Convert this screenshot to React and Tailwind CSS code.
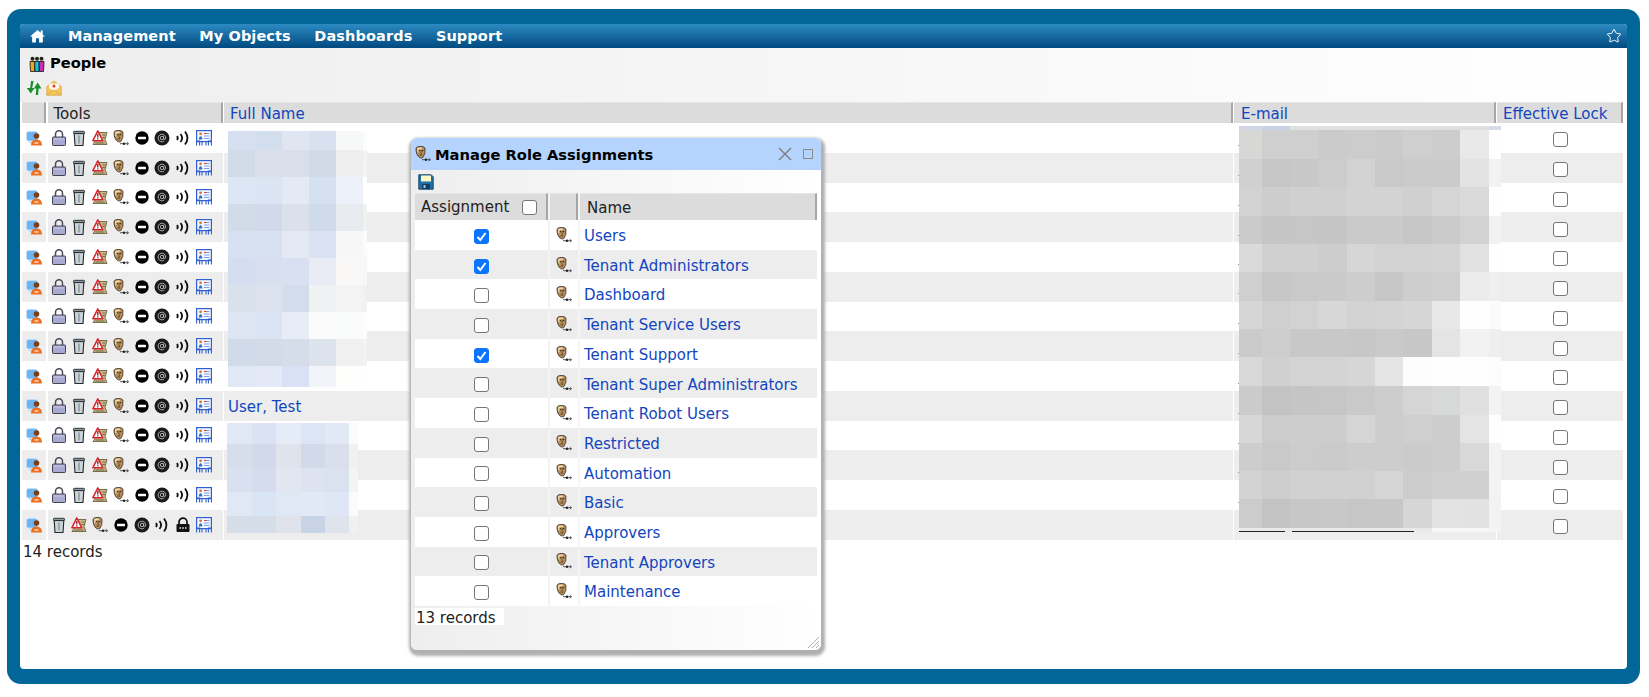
import React from 'react';
import { Star } from 'lucide-react';

const FONT = "font-['DejaVu_Sans',Verdana,sans-serif]";

// Lista de papéis do modal: [nome, marcado]
const ROLES = [
  ['Users', true],
  ['Tenant Administrators', true],
  ['Dashboard', false],
  ['Tenant Service Users', false],
  ['Tenant Support', true],
  ['Tenant Super Administrators', false],
  ['Tenant Robot Users', false],
  ['Restricted', false],
  ['Automation', false],
  ['Basic', false],
  ['Approvers', false],
  ['Tenant Approvers', false],
  ['Maintenance', false],
];

// Blocos pixelados que escondem nomes e e-mails
const NAME_A = {
  xs: [0, 27, 54, 81, 108, 135, 139],
  ys: [0, 19, 46, 73, 100, 127, 154, 181, 208, 235, 256],
  rows: [
    ['d5dff0', 'd3dfef', 'dfe6f2', 'd9e1f0', 'f7f9f9', 'fbfcfc'],
    ['d2dbe8', 'd9e0e9', 'd8dfea', 'd2dae8', 'efefef', 'f3f3f3'],
    ['dde6f4', 'dbe4f3', 'e3e9f5', 'd5e0f1', 'ebf0f9', 'ffffff'],
    ['d2dbe8', 'd2d9ea', 'dbe1ea', 'cfdbeb', 'e7eaee', 'f0f0f0'],
    ['d8e1f2', 'd8e1f2', 'e4e9f4', 'dbe3f2', 'f7f7f8', 'fbfbfb'],
    ['d5def0', 'd8e0f0', 'd9e0f1', 'e9ecf5', 'f9f8f7', 'f7f7f7'],
    ['d9e1ec', 'dbe2ed', 'd3dcea', 'f0f1f3', 'f3f3f3', 'f1f1f1'],
    ['dde5f3', 'dbe4f3', 'e7ecf6', 'fbfbfb', 'fafbfb', 'fcfcfc'],
    ['d1dae8', 'd3dbe9', 'd5dcea', 'dce3ec', 'f0f0f0', 'f3f3f3'],
    ['e0e7f5', 'e3e9f6', 'd9e2f4', 'f3f4fa', 'fefefd', 'ffffff'],
  ],
};

const NAME_B = {
  xs: [0, 25, 49, 74, 98, 122, 131],
  ys: [0, 21, 45, 69, 93, 110],
  rows: [
    ['e0e8f5', 'dae2f4', 'e6ecf7', 'dbe5f5', 'e1e8f6', 'fafbfe'],
    ['d6deeb', 'd1d9ea', 'dfe3ec', 'd2daea', 'd9dfeb', 'f0f0f0'],
    ['d9e1f0', 'd4dcee', 'e1e6f0', 'dde3f0', 'dae1ef', 'f3f4f6'],
    ['e0e8f6', 'd9e4f5', 'e0e8f5', 'e2e9f6', 'dfe7f6', 'fbfbfc'],
    ['d5dde9', 'd5dde9', 'e0e3eb', 'c8d3e6', 'dfe3ec', 'f0f1ef'],
  ],
};

const EMAIL = {
  xs: [0, 23, 51, 79, 108, 136, 164, 193, 221, 250, 262],
  ys: [0, 4, 32.7, 61, 89.7, 118, 146, 174.7, 203, 231, 260, 288.7, 316.7, 345, 373.3, 401.7, 406],
  rows: [
    ['d0d6e4', 'c9d2e4', 'e0e0e0', 'e0e0e0', 'e0e0e0', 'e0e0e0', 'e0e0e0', 'e0e0e0', 'e0e0e0', 'd6dcea'],
    ['d7d7d5', 'cfcfcf', 'cfcfcf', 'cbcbcb', 'cccccc', 'cbcbcb', 'cfcfcf', 'cdcdcd', 'e9e9e9', 'fefefe'],
    ['d0d0d0', 'c6c6c6', 'c8c8c8', 'cccccc', 'd2d2d2', 'c9c9c9', 'cbcbcb', 'cbcbcb', 'e3e3e3', 'f2f2f2'],
    ['d2d2d2', 'cdcdcd', 'd0d0d0', 'd0d0d0', 'd3d3d3', 'd3d3d3', 'd0d0d0', 'd5d5d5', 'dadada', 'fefefe'],
    ['cbcbcb', 'c5c5c5', 'c6c6c6', 'c5c5c5', 'cacaca', 'cacaca', 'c6c6c6', 'cbcbcb', 'd2d2d2', 'f2f2f2'],
    ['dadada', 'd0d0d0', 'd0d0d0', 'cdcdcd', 'd6d6d6', 'd2d2d2', 'd2d2d2', 'd4d4d4', 'e1e1e1', 'fefefe'],
    ['cfcfcf', 'c7c7c7', 'c9c9c9', 'cacaca', 'cdcdcd', 'c6c6c6', 'cecece', 'cfcfcf', 'ececec', 'efefef'],
    ['d6d6d6', 'cfcfcf', 'd2d2d2', 'd7d7d7', 'd2d2d2', 'd4d4d4', 'd6d6d6', 'e8e8e8', 'fefefe', 'fbfbfb'],
    ['cbcbcb', 'cecece', 'c8c8c8', 'c8c8c8', 'c7c7c7', 'c9c9c9', 'c7c7c7', 'e4e4e4', 'f2f2f2', 'efefef'],
    ['d8d8d8', 'd0d0d0', 'd4d4d4', 'd4d4d4', 'd6d6d6', 'e5e5e5', 'fcfcfc', 'fefefe', 'fefefe', 'fcfcfc'],
    ['cbcbcb', 'c3c3c3', 'c5c5c5', 'c6c6c6', 'c9c9c9', 'cdcdcd', 'd5d5d5', 'd7d9d9', 'e0e0e0', 'f3f3f3'],
    ['d7d7d7', 'cccccc', 'cdcdcd', 'cdcdcd', 'd5d5d5', 'cdcdcd', 'cfcfcf', 'cdcdcd', 'e4e4e4', 'fefefe'],
    ['cdcdcd', 'c9c9c9', 'cccccc', 'cbcbcb', 'cdcdcd', 'cdcdcd', 'cbcbcb', 'cdcdcd', 'd8d8d8', 'f3f3f3'],
    ['d3d3d3', 'cecece', 'd1d1d1', 'd1d1d1', 'd1d1d1', 'd5d5d5', 'cccccc', 'cfcfcf', 'd0d0d0', 'f3f3f3'],
    ['cccccc', 'c3c3c3', 'c7c7c7', 'c8c8c8', 'c6c6c6', 'c7c7c7', 'd6d6d6', 'e3e3e3', 'e2e2e2', 'f2f2f2'],
    ['e9e9e9', 'e9e9e9', 'e9e9e9', 'e9e9e9', 'e9e9e9', 'e9e9e9', 'e9e9e9', 'f6f6f6', 'f6f6f6', 'f4f4f4'],
  ],
};

// Restos de texto que aparecem à esquerda do bloco de e-mails
const EMAIL_DOTS = [19, 49, 79, 109, 138, 167, 197, 227, 257, 287, 317, 346, 376];

function Mosaic({ data, className, children }) {
  const w = data.xs[data.xs.length - 1];
  const h = data.ys[data.ys.length - 1];
  return (
    <svg className={`overflow-visible ${className}`} width={w} height={h} viewBox={`0 0 ${w} ${h}`} shapeRendering="crispEdges">
      {data.rows.map((row, r) =>
        row.map((c, i) => (
          <rect
            key={`${r}-${i}`}
            x={data.xs[i]}
            y={data.ys[r]}
            width={data.xs[i + 1] - data.xs[i]}
            height={data.ys[r + 1] - data.ys[r]}
            fill={`#${c}`}
          />
        ))
      )}
      {children}
    </svg>
  );
}

function Icon({ children, className = 'w-4 h-4 shrink-0' }) {
  return (
    <svg viewBox="0 0 16 16" className={className}>
      {children}
    </svg>
  );
}

const IconUserPc = () => (
  <Icon>
    <rect x="0.500" y="1.500" width="11" height="9.500" rx="2" fill="#6fb4f2" stroke="#c3def7" strokeWidth="0.900" />
    <path d="M3 12.500h6" stroke="#c3d6e8" strokeWidth="1.300" />
    <circle cx="10.500" cy="6" r="2.800" fill="#7a3f18" />
    <path d="M5 15.500c0-4 2.300-6 5.500-6s5.500 2 5.500 6z" fill="#ec6f22" />
    <path d="M8.500 13h4" stroke="#fde6d4" strokeWidth="1.300" />
  </Icon>
);

const IconLock = () => (
  <Icon>
    <path d="M4.500 7.500V4.300a3.500 3.500 0 0 1 7 0v3.200" fill="none" stroke="#4a4a58" strokeWidth="1.500" />
    <rect x="1.500" y="7" width="13" height="8.500" rx="0.800" fill="#a9aad2" stroke="#33343f" strokeWidth="0.900" />
    <path d="M3 9h10" stroke="#c9cae8" strokeWidth="1" />
  </Icon>
);

const IconTrash = () => (
  <Icon>
    <path d="M3.200 3.500h9.600l-.8 12H4z" fill="#ccd4d7" stroke="#23292c" strokeWidth="1.100" />
    <rect x="2.500" y="1.300" width="11" height="2.300" rx="0.800" fill="#8d999e" stroke="#23292c" strokeWidth="0.900" />
    <path d="M8 5.500v8" stroke="#8d999e" strokeWidth="1.500" />
  </Icon>
);

const IconWarn = () => (
  <Icon>
    <path d="M7 2.500h8l-2 7 2 5H1l2-3z" fill="#c5b98a" stroke="#5f5630" strokeWidth="0.800" />
    <path d="M10.500 5h3M10.500 7.500h2.300M3.500 13h9" stroke="#5f5630" strokeWidth="0.800" />
    <path d="M5.800 0.800l5 10H0.800z" fill="#fff" stroke="#d8242c" strokeWidth="1.500" strokeLinejoin="round" />
    <path d="M5.800 4v3.500M5.800 8.300v1.200" stroke="#8c1b20" strokeWidth="1.300" />
  </Icon>
);

const IconMask = () => (
  <Icon>
    <path d="M1 3C1 1 3 .5 5.500 .5S10 1 10 3c0 1-.3 2.200-.2 3.300.1 1 .2 1.700-.5 2.200L7.800 11.500c-.6.500-2 .6-3 0C2.500 10.500 1 6.500 1 3z" fill="#b98f5e" stroke="#2e2414" strokeWidth="0.800" />
    <path d="M2 2.500c1-.9 3.500-1 5-.8l-.3 1.300c-1.200-.2-2.400-.1-3.300.5l.1 2.800-1.100.2z" fill="#f0dcb2" />
    <path d="M3.800 4.700h1.500M6.400 4.700h2" stroke="#2e2414" strokeWidth="1" />
    <path d="M6 5v2.500h1.200" fill="none" stroke="#5f431f" strokeWidth="0.700" />
    <path d="M4.500 9h2.600" stroke="#2e2414" strokeWidth="0.800" />
    <path d="M7 13.700h8.300" stroke="#333" strokeWidth="0.800" />
    <circle cx="11" cy="13.700" r="1.200" fill="#222" />
    <path d="M13.800 12.300l1.700 1.400-1.700 1.400" fill="none" stroke="#333" strokeWidth="0.800" />
  </Icon>
);

const IconMinus = () => (
  <Icon>
    <circle cx="8" cy="8" r="6.700" fill="#000" />
    <rect x="4" y="6.700" width="8" height="2.600" rx="0.500" fill="#fff" />
  </Icon>
);

const IconAt = () => (
  <Icon>
    <circle cx="8" cy="8" r="7.500" fill="#1a1a1a" />
    <circle cx="8" cy="8" r="1.700" fill="none" stroke="#bdbdbd" strokeWidth="0.900" />
    <path d="M9.700 6.300v2.600c0 1.400 2 1.100 2-.9a3.800 3.800 0 1 0-1.700 3.200" fill="none" stroke="#bdbdbd" strokeWidth="0.900" />
  </Icon>
);

const IconWaves = () => (
  <Icon>
    <path d="M2 6c1 1.300 1 2.700 0 4" fill="none" stroke="#111" strokeWidth="1.800" />
    <path d="M5.500 4c2 2.500 2 5.500 0 8" fill="none" stroke="#111" strokeWidth="1.800" />
    <path d="M10 1.500c3 4 3 9 0 13" fill="none" stroke="#111" strokeWidth="1.800" />
  </Icon>
);

const IconBlackLock = () => (
  <Icon>
    <path d="M4 8V5.200a4 4 0 0 1 8 0V8" fill="none" stroke="#111" strokeWidth="1.700" />
    <rect x="1.500" y="7" width="13" height="8" rx="1" fill="#111" />
    <path d="M4.500 11h1.400M7.300 11h1.400M10.100 11h1.400" stroke="#fff" strokeWidth="1.500" />
  </Icon>
);

const IconCard = () => (
  <Icon>
    <rect x="0.600" y="0.600" width="14.800" height="11" fill="#f4f7ff" stroke="#2f5fd0" strokeWidth="1.200" />
    <path d="M0.600 15.500V11h3v4.500M6 15.500V11.500M10 15.500V11.500M12.400 15.500V11h3v4.500" fill="none" stroke="#2f5fd0" strokeWidth="1.100" />
    <circle cx="4.600" cy="3.800" r="1.400" fill="#d9772e" />
    <path d="M2.800 9.500c0-2 .8-3.300 1.800-3.300s1.800 1.300 1.800 3.300z" fill="#2f72c8" />
    <path d="M8 3.500h5.500M8 6h5.500M8 8.500h5.500" stroke="#7f9fe0" strokeWidth="1" />
    <path d="M8 3.500h2.500" stroke="#c8463a" strokeWidth="1" />
  </Icon>
);

const IconPeople = () => (
  <Icon>
    <circle cx="3.500" cy="2.800" r="2" fill="#26231b" />
    <circle cx="8" cy="2.800" r="2" fill="#26231b" />
    <circle cx="12.500" cy="2.800" r="2" fill="#26231b" />
    <path d="M1 5.500h5l-.5 10H1.500z" fill="#f0a818" stroke="#111" strokeWidth="0.800" />
    <path d="M5.700 5.500h4.600l-.3 10H6z" fill="#12c4dc" stroke="#111" strokeWidth="0.800" />
    <path d="M10 5.500h5l-.5 10h-4z" fill="#d02cb0" stroke="#111" strokeWidth="0.800" />
  </Icon>
);

const IconRefresh = () => (
  <Icon>
    <path d="M7.500 1L5 1 4.200 8H0.800L4.800 13.500 8.500 8H6.200z" fill="#1c8f2a" />
    <path d="M11.700 2.500L7.800 8.500h2.500L9.800 15h2.300l.5-6.500H15.500z" fill="#1c8f2a" />
  </Icon>
);

const IconMail = () => (
  <Icon>
    <path d="M0.800 6.500L8 1l7.200 5.500v8.700H0.800z" fill="#f6c65c" stroke="#d79f34" strokeWidth="0.700" />
    <path d="M3 8V3.500h10V8L8 11z" fill="#fdf4e6" />
    <circle cx="8" cy="6" r="1.500" fill="#d8402e" />
    <path d="M0.800 15l7.200-5 7.200 5" fill="none" stroke="#dba63e" strokeWidth="0.800" />
  </Icon>
);

const IconSave = () => (
  <Icon>
    <path d="M0.800 0.800h12.400l2 2v12.400H0.800z" fill="#1f6fa8" stroke="#214c6c" strokeWidth="1" />
    <rect x="3" y="1.500" width="10" height="6" fill="#fdf6c8" />
    <rect x="4" y="10" width="8" height="5" fill="#0f3d63" />
    <rect x="5.500" y="11" width="2" height="3" fill="#9cc5e4" />
  </Icon>
);

const TOOLS = [IconLock, IconTrash, IconWarn, IconMask, IconMinus, IconAt, IconWaves, IconCard];
const TOOLS_LOCKED = [IconTrash, IconWarn, IconMask, IconMinus, IconAt, IconWaves, IconBlackLock, IconCard];

function Check({ checked }) {
  return (
    <span className="relative inline-flex w-[15px] h-[15px]">
      <input
        type="checkbox"
        readOnly
        checked={checked}
        className="appearance-none w-[15px] h-[15px] rounded-[3px] border border-[#767676] bg-white checked:bg-[#0b75ff] checked:border-[#0b75ff]"
      />
      {checked && (
        <svg viewBox="0 0 15 15" className="absolute inset-0 w-[15px] h-[15px]">
          <path d="M3.500 8l2.800 3 5.200-7" fill="none" stroke="#fff" strokeWidth="2" />
        </svg>
      )}
    </span>
  );
}

function HeaderCell({ children, className = '' }) {
  return (
    <div className={`bg-[#dcdcdc] border-b-2 border-r-2 border-[#a6a6a6] border-t border-t-[#e6e6e6] flex items-center ${className}`}>
      {children}
    </div>
  );
}

const rowBg = (i) => (i % 2 === 1 ? 'bg-[#ededed]' : 'bg-white');

const MAIN_COLS = 'grid grid-cols-[24px_175px_1008.5px_261.5px_126px] gap-x-[1.5px]';
const MODAL_COLS = 'grid grid-cols-[133px_28px_237px] gap-x-[2px]';

export default function App() {
  const rows = Array.from({ length: 14 }, (_, i) => i);

  return (
    <div className={`w-[1649px] h-[697px] bg-white pt-[9px] pl-[7px] overflow-hidden ${FONT} text-[15px] text-[#222]`}>
      <div className="w-[1633px] h-[675px] bg-[#026699] rounded-[14px] pt-[15px] px-[13px] pb-[15px]">
        <div className="relative h-full bg-white rounded-t-[4px] rounded-b-[4px] flex flex-col">
          {/* Barra de navegação */}
          <nav className="h-[24px] shrink-0 rounded-t-[4px] bg-gradient-to-b from-[#2c8bc2] to-[#014a80] flex items-center pl-[10px] pr-[5px] text-white font-bold text-[14.500px]">
            <svg viewBox="0 0 16 14" className="w-[15px] h-[14px] mr-[23px]" fill="#fff">
              <path d="M8 0.500L0 7.500h2.300V14h4V9.500h3.400V14h4V7.500H16L13.500 5.300V1h-2v2.500z" />
            </svg>
            <div className="flex gap-[23.500px] tracking-[0.1px] pt-[1px]">
              <span>Management</span>
              <span>My Objects</span>
              <span>Dashboards</span>
              <span>Support</span>
            </div>
            <Star className="ml-auto w-[16px] h-[16px] text-white" strokeWidth={1.5} />
          </nav>

          {/* Título e barra de ferramentas */}
          <div className="h-[54px] shrink-0 bg-gradient-to-r from-[#eeeeee] to-white pl-[6px]">
            <div className="flex items-center gap-[5px] pt-[3px] pl-[3px] h-[28px]">
              <IconPeople />
              <span className="font-bold text-[14.700px] text-black">People</span>
            </div>
            <div className="flex items-center gap-[4px] pt-[4px]">
              <IconRefresh />
              <IconMail />
            </div>
          </div>

          {/* Tabela de pessoas */}
          <div className="px-[2px] relative">
            <div className={`${MAIN_COLS} h-[21px]`}>
              <HeaderCell />
              <HeaderCell className="pl-[6px] pb-[2px]">Tools</HeaderCell>
              <HeaderCell className="pl-[6px] pb-[2px] text-[#1246bf]">Full Name</HeaderCell>
              <HeaderCell className="pl-[7px] pb-[2px] text-[#1246bf]">E-mail</HeaderCell>
              <HeaderCell className="pl-[6px] pb-[2px] text-[#1246bf]">Effective Lock</HeaderCell>
            </div>
            {rows.map((i) => {
              const tools = i === 13 ? TOOLS_LOCKED : TOOLS;
              return (
                <div key={i} className={`${MAIN_COLS} h-[29.75px]`}>
                  <div className={`${rowBg(i)} flex items-center justify-center`}>
                    <IconUserPc />
                  </div>
                  <div className={`${rowBg(i)} flex items-center gap-[4.800px] pl-[3px]`}>
                    {tools.map((T, k) => (
                      <T key={k} />
                    ))}
                  </div>
                  <div className={`${rowBg(i)} flex items-center pl-[4px] pt-[3px] text-[#1246bf]`}>
                    {i === 9 ? 'User, Test' : ''}
                  </div>
                  <div className={rowBg(i)} />
                  <div className={`${rowBg(i)} flex items-center justify-center pt-[4px]`}>
                    <Check checked={false} />
                  </div>
                </div>
              );
            })}
            <div className="pl-[1px] pt-[1px] text-[#222]">14 records</div>

            {/* Redações sobre nomes e e-mails */}
            <Mosaic data={NAME_A} className="absolute left-[208px] top-[29px]" />
            <Mosaic data={NAME_B} className="absolute left-[207px] top-[321px]" />
            <Mosaic data={EMAIL} className="absolute left-[1219px] top-[24px]">
              {EMAIL_DOTS.map((y) => (
                <rect key={y} x="-1.500" y={y} width="1.500" height="1" fill="#999" />
              ))}
              <rect x="0" y="405" width="46" height="1" fill="#222" />
              <rect x="53" y="405" width="122" height="1" fill="#222" />
            </Mosaic>
          </div>

          {/* Modal de papéis */}
          <div className="absolute left-[391px] top-[114px] w-[410px] h-[512px] rounded-[6px] overflow-hidden bg-gradient-to-r from-[#eeeeee] to-white shadow-[1px_3px_3px_3px_#b0b0b0] flex flex-col">
            <div className="h-[32px] shrink-0 bg-[#b4d3fd] flex items-center pl-[4px] pr-[8px]">
              <IconMask />
              <span className="ml-[4px] pt-[2px] font-bold text-black text-[14.700px]">Manage Role Assignments</span>
              <svg viewBox="0 0 14 14" className="ml-auto w-[14px] h-[14px]" stroke="#7c7c7c" strokeWidth="1.400">
                <path d="M1 1l12 12M13 1L1 13" />
              </svg>
              <span className="ml-[11px] w-[10px] h-[10px] border border-[#8a8a8a]" />
            </div>

            <div className="h-[23px] shrink-0 pl-[7px] pt-[4px]">
              <IconSave />
            </div>

            <div className="pl-[4px]">
              <div className={`${MODAL_COLS} h-[27px]`}>
                <HeaderCell className="pl-[6px] justify-between pr-[9px]">
                  Assignment
                  <span className="mt-[1px] inline-flex">
                    <Check checked={false} />
                  </span>
                </HeaderCell>
                <HeaderCell />
                <HeaderCell className="pl-[7px] pt-[3px]">Name</HeaderCell>
              </div>
              {ROLES.map(([name, checked], i) => (
                <div key={name} className={`${MODAL_COLS} h-[29.700px]`}>
                  <div className={`${rowBg(i)} flex items-center justify-center pt-[3px]`}>
                    <Check checked={checked} />
                  </div>
                  <div className={`${rowBg(i)} flex items-center justify-center`}>
                    <IconMask />
                  </div>
                  <div className={`${rowBg(i)} flex items-center pl-[4px] pt-[3px] text-[#1246bf]`}>{name}</div>
                </div>
              ))}
              <div className="mt-[2px] pl-[1px] w-[89px] h-[17px] bg-white leading-[21px] text-[#222]">13 records</div>
            </div>

            {/* Alça de redimensionar */}
            <svg viewBox="0 0 12 12" className="absolute right-[2px] bottom-[2px] w-[12px] h-[12px]" stroke="#999" strokeWidth="0.800">
              <path d="M1 12L12 1M5 12l7-7M9 12l3-3" />
            </svg>
          </div>
        </div>
      </div>
    </div>
  );
}
